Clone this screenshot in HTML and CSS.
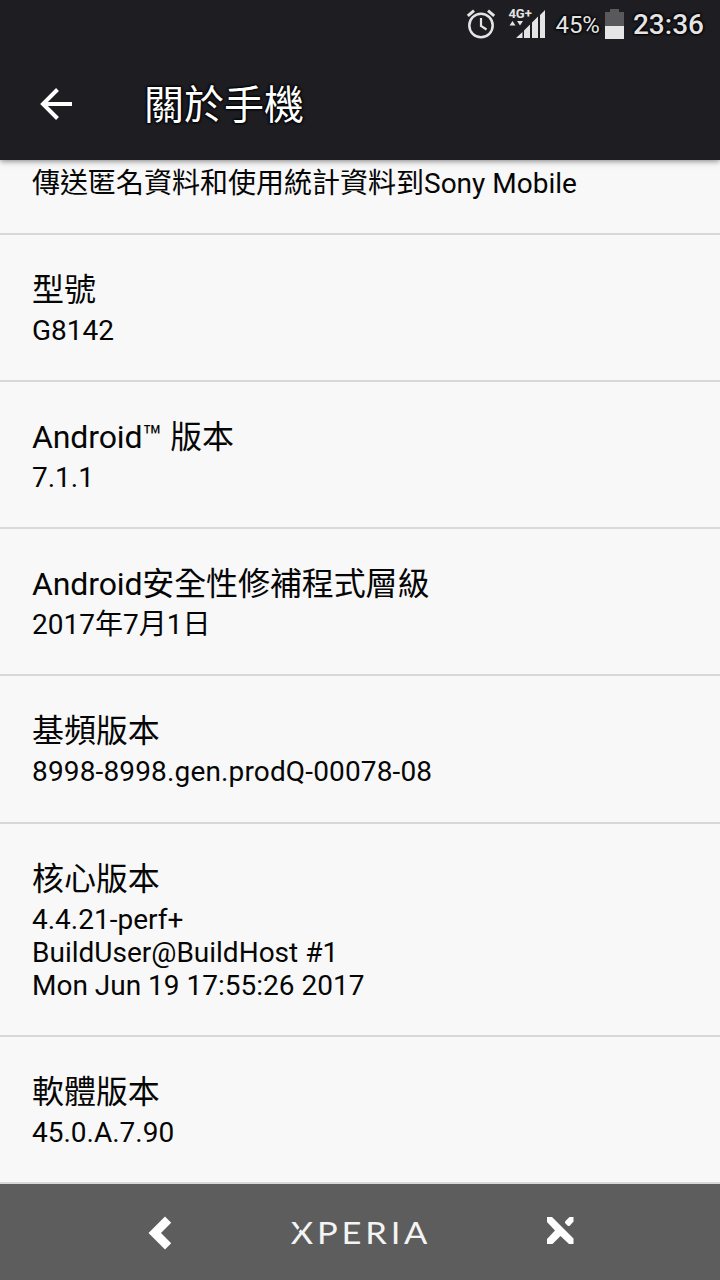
FILE: index.html
```
<!DOCTYPE html>
<html lang="zh-Hant">
<head>
    <meta charset="UTF-8">
    <meta name="viewport" content="width=device-width, initial-scale=1.0">
    <title>關於手機</title>
    <link rel="stylesheet" href="styles.css">
</head>
<body>
    <div class="phone">
        <header class="header">
            <div class="status-bar">
                <svg class="alarm-icon" width="30" height="32" viewBox="0 0 30 32" fill="none" stroke="#e4e4e4">
                    <circle cx="15" cy="17.5" r="11.7" stroke-width="2.5"/>
                    <path d="M15 10v8l5.5 3.5" stroke-width="2.2"/>
                    <path d="M1.8 7.8l6.2-5.2M28.2 7.8l-6.2-5.2" stroke-width="3"/>
                </svg>
                <div class="signal">
                    <span class="network">4G+</span>
                    <svg width="38" height="32" viewBox="0 0 38 32" fill="#e4e4e4">
                        <path d="M2.500 17.500l3-4.500 3 4.500zM10 13h6l-3 4.500z"/>
                        <path d="M9 30l6.500-6v6zM17 30v-7.500l6-6v13.500zM25 30v-15.500l6-6v21.500zM33 30v-23l5-5v28z"/>
                    </svg>
                </div>
                <span class="percent">45%</span>
                <svg class="battery-icon" width="19" height="30" viewBox="0 0 19 30">
                    <path d="M0 3h5v-3h9v3h5v27h-19z" fill="#59595b"/>
                    <path d="M0 17h19v13h-19z" fill="#e6e6e6"/>
                </svg>
                <span class="clock">23:36</span>
            </div>
            <div class="toolbar">
                <svg class="back-icon" width="34" height="34" viewBox="0 0 34 34" fill="none" stroke="#fff" stroke-width="4">
                    <path d="M18.500 2.500l-14.500 14.500 14.500 14.500M4 17h29"/>
                </svg>
                <h1 class="title">關於手機</h1>
            </div>
        </header>

        <main class="list">
            <div class="row row-first">
                <p class="detail">傳送匿名資料和使用統計資料到Sony Mobile</p>
            </div>
            <div class="row">
                <h2 class="label">型號</h2>
                <p class="detail">G8142</p>
            </div>
            <div class="row">
                <h2 class="label">Android™ 版本</h2>
                <p class="detail">7.1.1</p>
            </div>
            <div class="row">
                <h2 class="label">Android安全性修補程式層級</h2>
                <p class="detail">2017年7月1日</p>
            </div>
            <div class="row">
                <h2 class="label">基頻版本</h2>
                <p class="detail baseband">8998-8998.gen.prodQ-00078-08</p>
            </div>
            <div class="row">
                <h2 class="label">核心版本</h2>
                <p class="detail">4.4.21-perf+<br>BuildUser@BuildHost #1<br>Mon Jun 19 17:55:26 2017</p>
            </div>
            <div class="row">
                <h2 class="label">軟體版本</h2>
                <p class="detail">45.0.A.7.90</p>
            </div>
        </main>

        <nav class="nav-bar">
            <div class="nav-item">
                <svg class="nav-back" width="24" height="34" viewBox="0 0 24 34" fill="#fff">
                    <path d="M17 0.500l6.200 6.200-10.200 10.300 10.200 10.300-6.200 6.200-16.500-16.500z"/>
                </svg>
            </div>
            <div class="nav-item">
                <span class="brand">XPERIA</span>
            </div>
            <div class="nav-item">
                <svg class="nav-close" width="27" height="27" viewBox="0 0 27 27" fill="#fff">
                    <path d="M0 0h5l21.500 21.500v5.500h-4.500l-8.500-8-8 8h-5.500v-5l8-8.500-8-8.500z"/>
                    <path d="M18 4.500l4.500-4.500h4v4.500l-4 4.500h-1.500l-3-3z"/>
                </svg>
            </div>
        </nav>
    </div>
</body>
</html>
```
FILE: styles.css
```
* {
    box-sizing: border-box;
}
body {
    margin: 0;
    font-family: Roboto, "Noto Sans CJK TC", sans-serif;
    background: #f8f8f8;
    color: #060606;
}
h1, h2, p {
    margin: 0;
    font-weight: 400;
}
svg {
    display: block;
}
.phone {
    width: 720px;
    height: 1280px;
    display: flex;
    flex-direction: column;
    overflow: hidden;
}
.header {
    position: relative;
    flex: none;
    height: 160px;
    background: #1e1d22;
    color: #fff;
    box-shadow: 0 1px 6px rgba(0, 0, 0, 0.5);
}
.status-bar {
    height: 48px;
    padding-right: 16px;
    display: flex;
    align-items: center;
    justify-content: flex-end;
    color: #e4e4e4;
    text-shadow: 0 0 2px #000, 0 0 2px #000, 0 0 3px #000, 0 0 3px #000;
}
.alarm-icon {
    margin-right: 11px;
}
.signal {
    position: relative;
    margin-right: 10px;
}
.network {
    position: absolute;
    top: 0;
    left: 1px;
    font-size: 13px;
    font-weight: 700;
    line-height: 12px;
    text-shadow: none;
}
.percent {
    font-size: 24px;
    line-height: 30px;
    padding-top: 2px;
    margin-right: 5px;
}
.battery-icon {
    margin: 0 9px 1px 0;
}
.clock {
    font-size: 28px;
    font-weight: 500;
    line-height: 32px;
    padding-top: 2px;
}
.toolbar {
    height: 112px;
    padding: 0 0 0 39px;
    display: flex;
    align-items: center;
}
.back-icon {
    margin-right: 71px;
}
.title {
    font-size: 40px;
    line-height: 56px;
    padding-top: 4px;
    text-shadow: 0 0 2px #000, 0 0 2px #000, 0 0 3px #000, 0 0 3px #000;
}
.list {
    flex: 1;
    min-height: 0;
}
.row {
    padding: 32px 32px 33.300px;
    border-bottom: 2px solid #d8d8d8;
}
.row-first {
    height: 74.500px;
    padding-top: 7px;
}
.label {
    font-size: 32px;
    line-height: 46px;
    letter-spacing: -0.120px;
    margin-bottom: 1px;
}
.detail {
    font-size: 28px;
    line-height: 33px;
}
.baseband {
    letter-spacing: 0.150px;
}
.nav-bar {
    flex: none;
    height: 96px;
    padding: 0 60px;
    display: grid;
    grid-template-columns: repeat(3, 1fr);
    align-items: center;
    background: #5d5d5d;
    color: #f4f4f4;
}
.nav-item {
    display: flex;
    justify-content: center;
}
.nav-back {
    margin-top: 2px;
}
.nav-close {
    margin-bottom: 3px;
}
.brand {
    position: relative;
    font-family: Lato, sans-serif;
    font-size: 30px;
    line-height: 36px;
    letter-spacing: 3.300px;
    margin: 0 -3px 1px 0;
    transform: scaleX(1.150);
}
/* cut in the upper left arm of the X */
.brand::before {
    content: "";
    position: absolute;
    left: 7px;
    top: 11px;
    width: 1.500px;
    height: 7px;
    background: #5d5d5d;
    transform: rotate(38deg);
}
```
